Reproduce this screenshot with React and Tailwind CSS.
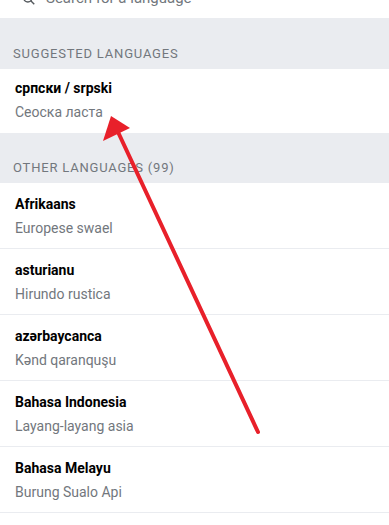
import React from "react";

const suggested = [{ name: "српски / srpski", label: "Сеоска ласта" }];

const others = [
  { name: "Afrikaans", label: "Europese swael" },
  { name: "asturianu", label: "Hirundo rustica" },
  { name: "azərbaycanca", label: "Kənd qaranquşu" },
  { name: "Bahasa Indonesia", label: "Layang-layang asia" },
  { name: "Bahasa Melayu", label: "Burung Sualo Api" },
];

function SectionHeader({ children }) {
  return (
    <div className="h-[50px] bg-[#eaecf0] px-[13px] pt-[25px] text-[13px] leading-[20px] tracking-[0.8px] text-[#72777d] uppercase">
      {children}
    </div>
  );
}

function LanguageRow({ lang, first }) {
  return (
    <div
      className={
        "bg-white px-[15px] " +
        (first ? "pt-[9px] pb-[11px]" : "pt-[11px] pb-[10px] border-b border-[#eaecf0]")
      }
    >
      <div className="text-[14px] leading-[20px] font-bold text-[#000]">
        {lang.name}
      </div>
      <div className="mt-[4px] text-[14px] leading-[20px] text-[#72777d]">
        {lang.label}
      </div>
    </div>
  );
}

export default function App() {
  return (
    <div
      className="relative h-[525px] w-[389px] overflow-hidden bg-white"
      style={{ fontFamily: "Roboto, 'Noto Sans', sans-serif" }}
    >
      {/* search field, mostly scrolled off the top */}
      <div className="-mt-[21px] flex h-[40px] items-center gap-[10px] border-b border-[#eaecf0] px-[22px] text-[15px] text-[#72777d]">
        <svg width="14" height="14" viewBox="0 0 24 24" fill="none" stroke="#54595d" strokeWidth="2.5">
          <circle cx="10" cy="10" r="7" />
          <path d="M15 15l6 6" />
        </svg>
        <span>Search for a language</span>
      </div>

      <SectionHeader>Suggested languages</SectionHeader>
      {suggested.map((l) => (
        <LanguageRow key={l.name} lang={l} first />
      ))}

      <SectionHeader>Other languages (99)</SectionHeader>
      {others.map((l) => (
        <LanguageRow key={l.name} lang={l} />
      ))}

      {/* red annotation arrow */}
      <svg
        className="pointer-events-none absolute left-0 top-0"
        width="389"
        height="525"
      >
        <line x1="258" y1="432" x2="118" y2="132" stroke="#e8202a" strokeWidth="4" strokeLinecap="round" />
        <polygon points="111,116 103,141 130,128" fill="#e8202a" />
      </svg>
    </div>
  );
}
